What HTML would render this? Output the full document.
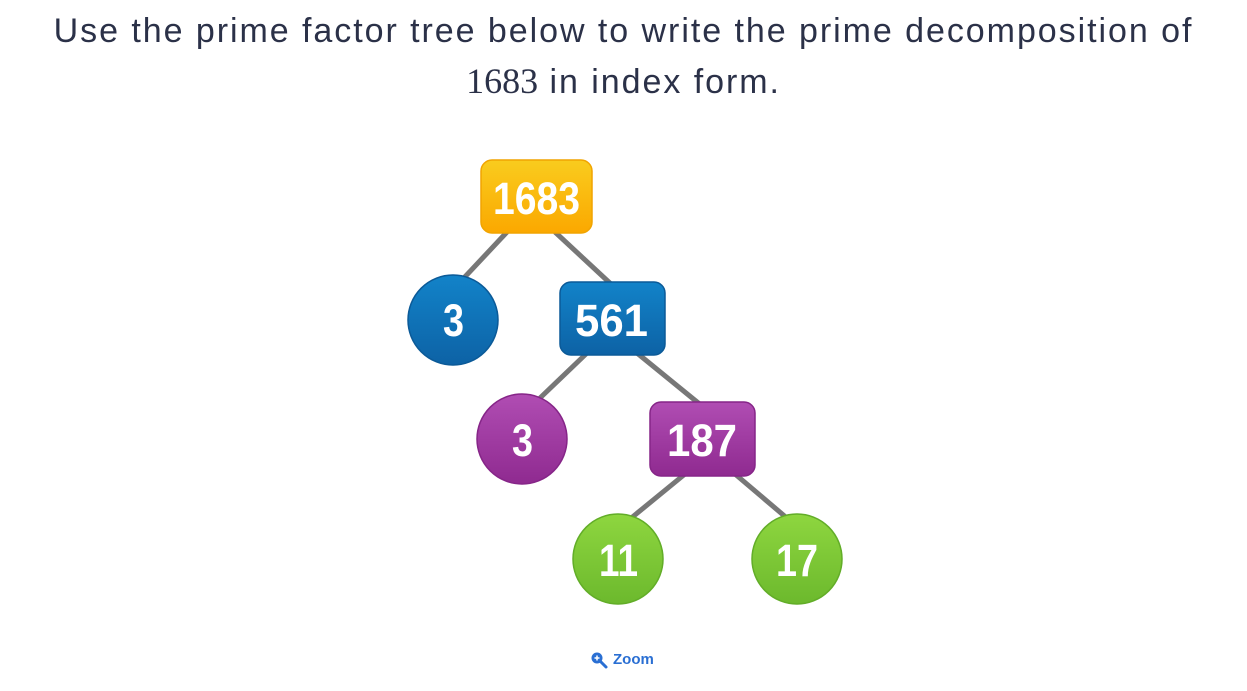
<!DOCTYPE html>
<html><head><style>
body{margin:0;width:1247px;height:691px;background:#fff;overflow:hidden;font-family:"Liberation Sans",sans-serif;}
h1{margin:0;position:absolute;top:6px;left:0;width:1247px;text-align:center;font-weight:normal;font-size:34px;letter-spacing:1.95px;line-height:50px;color:#2b3148;}
.m{font-family:"Liberation Serif",serif;font-size:36px;letter-spacing:0;}
.z{position:absolute;top:651px;color:#2a6fd3;font-weight:bold;font-size:15px;}
svg{position:absolute;left:0;top:0}
</style></head><body>
<h1>Use the prime factor tree below to write the prime decomposition of<br><span class="m">1683</span> in index form.</h1>
<svg width="1247" height="691">
<defs>
<linearGradient id="o" x1="0" y1="0" x2="0" y2="1"><stop offset="0" stop-color="#f9cc1e"/><stop offset="1" stop-color="#fba800"/></linearGradient>
<linearGradient id="b" x1="0" y1="0" x2="0" y2="1"><stop offset="0" stop-color="#1283c9"/><stop offset="1" stop-color="#0d62a5"/></linearGradient>
<linearGradient id="p" x1="0" y1="0" x2="0" y2="1"><stop offset="0" stop-color="#b04db3"/><stop offset="1" stop-color="#8f2a90"/></linearGradient>
<linearGradient id="g" x1="0" y1="0" x2="0" y2="1"><stop offset="0" stop-color="#8ed63f"/><stop offset="1" stop-color="#6cb92d"/></linearGradient>
</defs>
<g stroke="#777" stroke-width="5">
<line x1="507" y1="232" x2="462" y2="280"/><line x1="555" y1="232" x2="612" y2="285"/>
<line x1="587" y1="353" x2="540" y2="398"/><line x1="637" y1="353" x2="702" y2="406"/>
<line x1="685" y1="474" x2="630" y2="519"/><line x1="735" y1="474" x2="788" y2="519"/>
</g>
<rect x="481" y="160" width="111" height="73" rx="11" fill="url(#o)" stroke="#f1a400" stroke-width="1.5"/>
<circle cx="453" cy="320" r="45" fill="url(#b)" stroke="#0b5a98" stroke-width="1.5"/>
<rect x="560" y="282" width="105" height="73" rx="11" fill="url(#b)" stroke="#0b5a98" stroke-width="1.5"/>
<circle cx="522" cy="439" r="45" fill="url(#p)" stroke="#862588" stroke-width="1.5"/>
<rect x="650" y="402" width="105" height="74" rx="11" fill="url(#p)" stroke="#862588" stroke-width="1.5"/>
<circle cx="618" cy="559" r="45" fill="url(#g)" stroke="#62ad28" stroke-width="1.5"/>
<circle cx="797" cy="559" r="45" fill="url(#g)" stroke="#62ad28" stroke-width="1.5"/>
<g fill="#fff" font-family="'Liberation Sans',sans-serif" font-weight="bold" font-size="45">
<text x="493" y="214" textLength="87" lengthAdjust="spacingAndGlyphs">1683</text>
<text x="443" y="336" textLength="21" lengthAdjust="spacingAndGlyphs">3</text>
<text x="575" y="336" textLength="73" lengthAdjust="spacingAndGlyphs">561</text>
<text x="512" y="456" textLength="21" lengthAdjust="spacingAndGlyphs">3</text>
<text x="667" y="456" textLength="70" lengthAdjust="spacingAndGlyphs">187</text>
<text x="599" y="576" textLength="39" lengthAdjust="spacingAndGlyphs">11</text>
<text x="776" y="576" textLength="42" lengthAdjust="spacingAndGlyphs">17</text>
</g>
<circle cx="597" cy="658" r="5.5" fill="#2a6fd3"/>
<line x1="601" y1="662" x2="606" y2="667" stroke="#2a6fd3" stroke-width="3" stroke-linecap="round"/>
<path d="M594.5 658h5M597 655.5v5" stroke="#fff" stroke-width="1.5"/>
</svg>
<div class="z" style="left:613px;">Zoom</div>
</body></html>
